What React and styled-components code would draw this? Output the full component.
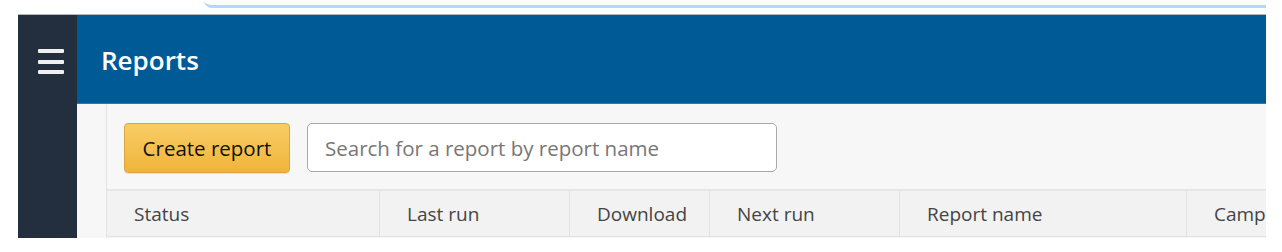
import React from "react";
import styled, { createGlobalStyle } from "styled-components";

const Global = createGlobalStyle`
  html, body { margin: 0; padding: 0; background: #ffffff; }
  body { font-family: "Open Sans", "Noto Sans", sans-serif; }
  * { box-sizing: border-box; }
`;

const Page = styled.div`
  width: 1282px;
  height: 252px;
  padding: 0 16px 0 18px;
  overflow: hidden;
  background: #ffffff;
`;

const TopStrip = styled.div`
  height: 14px;
  padding-left: 186px;
`;

const FocusEdge = styled.div`
  height: 8px;
  border-bottom: 3px solid #b6d6fb;
  border-bottom-left-radius: 14px;
`;

const Frame = styled.div`
  display: flex;
  height: 224px;
  border-top: 1px solid #b4b9bf;
`;

const Sidebar = styled.nav`
  width: 59px;
  flex: none;
  background: #232f3e;
  padding: 34px 0 0 20px;
  display: flex;
  flex-direction: column;
  gap: 6.5px;
`;

const Bar = styled.span`
  display: block;
  width: 26px;
  height: 4px;
  background: #f0f0f0;
  border-radius: 1px;
`;

const Main = styled.div`
  flex: 1;
  display: flex;
  flex-direction: column;
  min-width: 0;
`;

const Header = styled.header`
  height: 89px;
  flex: none;
  background: #005a96;
  border-bottom: 1px solid #2f78b0;
  display: flex;
  align-items: center;
  padding: 0 0 0 24px;
`;

const Title = styled.h1`
  margin: 0;
  font-family: "Open Sans", sans-serif;
  font-weight: 600;
  font-size: 26px;
  color: #ffffff;
  line-height: 1;
  position: relative;
  top: 1px;
`;

const Content = styled.div`
  flex: 1;
  background: #f7f7f7;
  padding-left: 29px;
  display: flex;
`;

const Panel = styled.section`
  flex: 1;
  border-left: 1px solid #e4e4e4;
  display: flex;
  flex-direction: column;
  min-width: 0;
`;

const Toolbar = styled.div`
  display: flex;
  align-items: flex-start;
  gap: 17px;
  padding: 19px 0 0 17px;
  height: 85px;
  flex: none;
`;

const PrimaryButton = styled.button`
  width: 166px;
  height: 50px;
  border: 1px solid #d9a640;
  border-radius: 4px;
  background: linear-gradient(#f8cd66, #f0b43a);
  font-family: "Open Sans", sans-serif;
  font-size: 20.5px;
  color: #111111;
  padding: 0;
  cursor: pointer;
  box-shadow: 0 1px 0 rgba(0, 0, 0, 0.08);
`;

const SearchBox = styled.input`
  width: 470px;
  height: 49px;
  border: 1px solid #a9a9a9;
  border-radius: 5px;
  background: #ffffff;
  padding: 0 0 0 17px;
  font-family: "Open Sans", sans-serif;
  font-size: 20.5px;
  color: #333;
  outline: none;
  &::placeholder { color: #777777; }
`;

const HeaderRow = styled.div`
  display: grid;
  grid-template-columns: 272px 190px 140px 190px 287px 200px;
  height: 48px;
  background: #f2f2f2;
  border-top: 2px solid #e6e6e6;
  border-bottom: 1px solid #e2e2e2;
  overflow: hidden;
`;

const HeadCell = styled.div`
  display: flex;
  align-items: center;
  padding-left: 27px;
  font-size: 19px;
  color: #444444;
  white-space: nowrap;
  border-left: ${(p) => (p.$first ? "none" : "1px solid #e2e2e2")};
`;

const columns = ["Status", "Last run", "Download", "Next run", "Report name", "Campaign"];

export default function App() {
  return (
    <>
      <Global />
      <Page>
        <TopStrip>
          <FocusEdge />
        </TopStrip>
        <Frame>
          <Sidebar>
            <Bar />
            <Bar />
            <Bar />
          </Sidebar>
          <Main>
            <Header>
              <Title>Reports</Title>
            </Header>
            <Content>
              <Panel>
                <Toolbar>
                  <PrimaryButton>Create report</PrimaryButton>
                  <SearchBox placeholder="Search for a report by report name" />
                </Toolbar>
                <HeaderRow>
                  {columns.map((c, i) => (
                    <HeadCell key={c} $first={i === 0}>
                      {c}
                    </HeadCell>
                  ))}
                </HeaderRow>
              </Panel>
            </Content>
          </Main>
        </Frame>
      </Page>
    </>
  );
}
